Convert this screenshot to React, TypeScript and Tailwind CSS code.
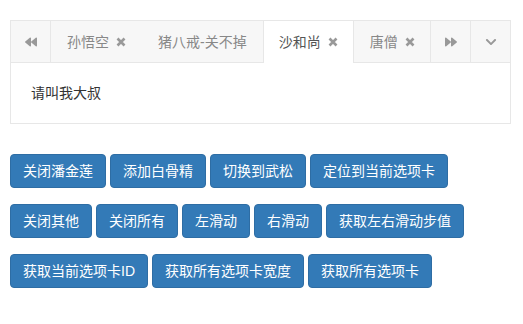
import { FaBackward, FaForward, FaChevronDown } from "react-icons/fa";

const tabs = [
  { name: "孙悟空", closable: true },
  { name: "猪八戒-关不掉", closable: false },
  { name: "沙和尚", closable: true, active: true },
  { name: "唐僧", closable: true },
];

const rows = [
  ["关闭潘金莲", "添加白骨精", "切换到武松", "定位到当前选项卡"],
  ["关闭其他", "关闭所有", "左滑动", "右滑动", "获取左右滑动步值"],
  ["获取当前选项卡ID", "获取所有选项卡宽度", "获取所有选项卡"],
];

export default function App() {
  return (
    <div className="w-[523px] h-[324px] bg-white pt-5 px-[10px] font-['Liberation_Sans','Noto_Sans_CJK_SC',sans-serif] text-sm">
      <TabPanel />
      <div className="flex flex-col gap-4 mt-[30px]">
        {rows.map((row, i) => (
          <div key={i} className="flex gap-1">
            {row.map((label) => (
              <Button key={label} label={label} />
            ))}
          </div>
        ))}
      </div>
    </div>
  );
}

function CloseIcon() {
  return (
    <svg width="10" height="10" viewBox="0 0 10 10" className="ml-[7px] shrink-0">
      <path
        d="M1.5 1.5 L8.5 8.5 M8.5 1.5 L1.5 8.5"
        stroke="#999"
        strokeWidth="2.6"
        strokeLinecap="butt"
      />
    </svg>
  );
}

function TabPanel() {
  return (
    <div className="w-[501px] border border-[#e7e7e7]">
      <div className="flex h-[42px] bg-[#f7f7f7] border-b border-[#e7e7e7]">
        <div className="w-[40px] shrink-0 flex items-center justify-center border-r border-[#e7e7e7] text-[#999]">
          <FaBackward size={12} />
        </div>
        <div className="flex flex-1 min-w-0">
          {tabs.map((t) => (
            <Tab key={t.name} {...t} />
          ))}
        </div>
        <div className="w-[40px] shrink-0 flex items-center justify-center border-l border-[#e7e7e7] text-[#999]">
          <FaForward size={12} />
        </div>
        <div className="w-[40px] shrink-0 flex items-center justify-center border-l border-[#e7e7e7] text-[#999]">
          <FaChevronDown size={12} />
        </div>
      </div>
      <div className="p-5 leading-5 text-[#333]">请叫我大叔</div>
    </div>
  );
}

function Tab({
  name,
  closable,
  active,
}: {
  name: string;
  closable: boolean;
  active?: boolean;
}) {
  return (
    <div
      className={
        active
          ? "flex shrink-0 items-center whitespace-nowrap px-[15px] border-x border-[#e7e7e7] bg-white text-[#555] -mb-px"
          : "flex shrink-0 items-center whitespace-nowrap px-[15px] border-x border-transparent text-[#888]"
      }
    >
      <span className="leading-5">{name}</span>
      {closable && <CloseIcon />}
    </div>
  );
}

function Button({ label }: { label: string }) {
  return (
    <button className="px-3 py-[6px] leading-5 text-sm text-white bg-[#337ab7] border border-[#2e6da4] rounded-[4px] whitespace-nowrap">
      {label}
    </button>
  );
}
